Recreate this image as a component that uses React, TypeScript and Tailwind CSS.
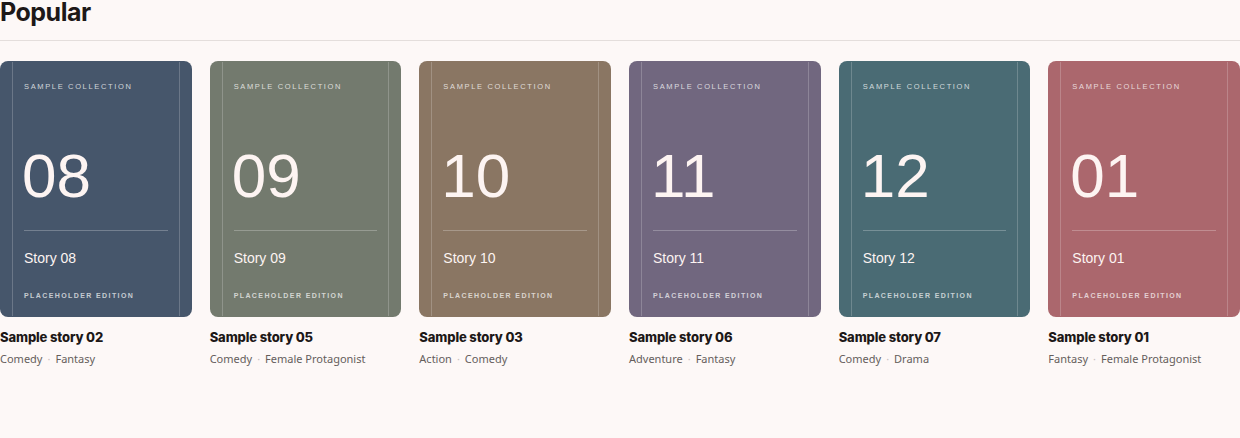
type Story = {
  title: string;
  issue: string;
  cover: string;
  tags: string[];
};

const stories: Story[] = [
  { title: "Sample story 02", issue: "08", cover: "bg-[#46566b]", tags: ["Comedy", "Fantasy"] },
  { title: "Sample story 05", issue: "09", cover: "bg-[#737a6e]", tags: ["Comedy", "Female Protagonist"] },
  { title: "Sample story 03", issue: "10", cover: "bg-[#8a7663]", tags: ["Action", "Comedy"] },
  { title: "Sample story 06", issue: "11", cover: "bg-[#71677f]", tags: ["Adventure", "Fantasy"] },
  { title: "Sample story 07", issue: "12", cover: "bg-[#4a6b74]", tags: ["Comedy", "Drama"] },
  { title: "Sample story 01", issue: "01", cover: "bg-[#ab676d]", tags: ["Fantasy", "Female Protagonist"] },
];

function Cover({ story }: { story: Story }) {
  return (
    <div
      className={`relative aspect-[3/4] overflow-hidden rounded-lg ${story.cover} font-['Liberation_Sans',Arial,sans-serif] text-[#fdf4f2]`}
    >
      {/* thin inset frame */}
      <div className="pointer-events-none absolute inset-x-3 inset-y-px border-x border-white/20" />
      <div className="relative flex h-full flex-col px-6 pt-5 pb-[15px]">
        <div className="text-[7.5px] leading-3 tracking-[0.22em] text-white/75">SAMPLE COLLECTION</div>
        <div className="flex-1" />
        <div className="mb-[23px] -ml-[2px] text-[62px] leading-none font-light">{story.issue}</div>
        <div className="h-px bg-white/25" />
        <div className="mt-[17px] mb-[22px] text-sm leading-5">Story {story.issue}</div>
        <div className="text-[7px] leading-3 font-bold tracking-[0.2em] text-white/70">PLACEHOLDER EDITION</div>
      </div>
    </div>
  );
}

export default function App() {
  return (
    <main className="min-h-[438px] bg-[#fdf8f7] text-[#1d1818]">
      <header className="border-b border-[#e4dedc] pb-[15px]">
        <h1 className="font-['Inter',sans-serif] text-[25px] leading-none font-bold tracking-[-0.02em]">Popular</h1>
      </header>

      <div className="mt-5 grid grid-cols-6 gap-[18px]">
        {stories.map((s) => (
          <div key={s.title}>
            <Cover story={s} />
            <div className="mt-[11px] font-['Inter',sans-serif] text-[13px] leading-[18px] font-extrabold tracking-[-0.01em]">
              {s.title}
            </div>
            <div className="mt-[5px] flex items-center gap-[5px] font-['Noto_Sans',sans-serif] text-[11px] leading-4 text-[#655e5c]">
              {s.tags.map((t, i) => (
                <span key={t} className="flex items-center gap-[5px]">
                  {i > 0 && <span className="text-[#c9c1bf]">·</span>}
                  {t}
                </span>
              ))}
            </div>
          </div>
        ))}
      </div>
    </main>
  );
}
